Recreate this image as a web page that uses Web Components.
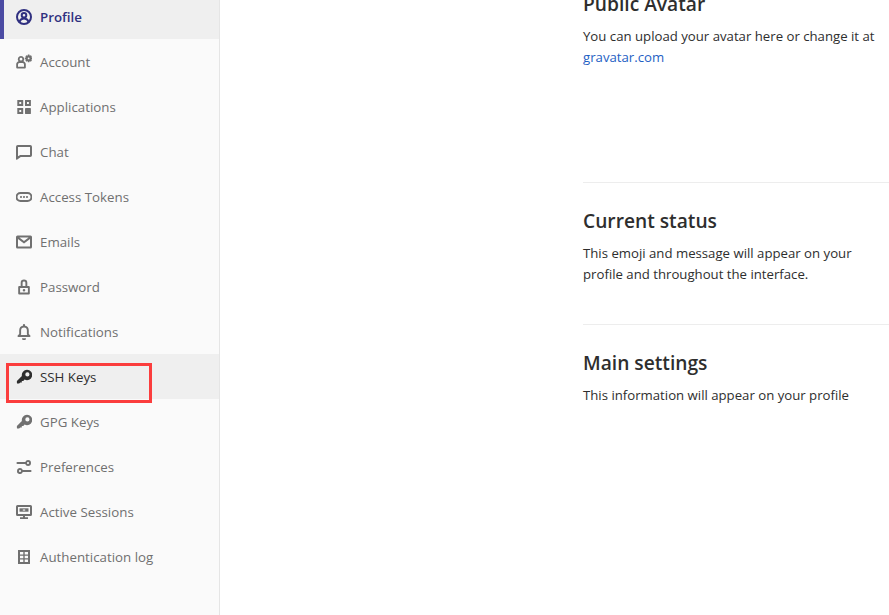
<!DOCTYPE html>
<html>
<head>
<meta charset="utf-8">
<style>
  html, body { margin: 0; height: 100%; overflow: hidden; background: #fff; }
  body { display: flex; font-family: "Open Sans", "Noto Sans", sans-serif; font-size: 13.2px; }
</style>
</head>
<body>
<side-bar>
  <side-item label="Profile" icon="profile" active></side-item>
  <side-item label="Account" icon="account"></side-item>
  <side-item label="Applications" icon="apps"></side-item>
  <side-item label="Chat" icon="chat"></side-item>
  <side-item label="Access Tokens" icon="token"></side-item>
  <side-item label="Emails" icon="mail"></side-item>
  <side-item label="Password" icon="lock"></side-item>
  <side-item label="Notifications" icon="bell"></side-item>
  <side-item label="SSH Keys" icon="key" hover marked></side-item>
  <side-item label="GPG Keys" icon="key"></side-item>
  <side-item label="Preferences" icon="prefs"></side-item>
  <side-item label="Active Sessions" icon="monitor"></side-item>
  <side-item label="Authentication log" icon="log"></side-item>
</side-bar>
<main-panel>
  <settings-block heading="Public Avatar" style="height:217px">You can upload your avatar here or change it at <a href="#">gravatar.com</a></settings-block>
  <settings-block heading="Current status" style="height:142px">This emoji and message will appear on your profile and throughout the interface.</settings-block>
  <settings-block heading="Main settings" style="height:120px">This information will appear on your profile</settings-block>
</main-panel>
<script>
const ICONS = {
  profile: '<circle cx="8" cy="8" r="7" fill="none" stroke="currentColor" stroke-width="2"/><circle cx="8" cy="6.300" r="2.300" fill="none" stroke="currentColor" stroke-width="2"/><path d="M3.400 12.800c.8-2.300 2.500-3.300 4.600-3.300s3.800 1 4.600 3.300" fill="none" stroke="currentColor" stroke-width="2"/>',
  account: '<path fill-rule="evenodd" d="M5 2a3.200 3.200 0 0 1 2.500 5.200c1.300.5 2.300 1.700 2.300 3.100v3.200a1 1 0 0 1-1 1h-7.600a1 1 0 0 1-1-1v-3.200c0-1.400 1-2.600 2.300-3.100A3.200 3.200 0 0 1 5 2zm0 1.800a1.400 1.400 0 1 0 0 2.800 1.400 1.400 0 0 0 0-2.800zM2 10.500v2.200h6v-2.200a1.600 1.600 0 0 0-1.600-1.400H3.600A1.600 1.600 0 0 0 2 10.500z"/><path fill-rule="evenodd" d="M11.900 .5h1.500l.3 1.200 1.100-.5 1.100 1.100-.6 1 1.200.4v1.500l-1.200.3.600 1.100-1.100 1.100-1.100-.6-.3 1.200h-1.500l-.3-1.200-1.100.6-1.100-1.100.6-1.100-1.200-.3V3.700l1.200-.4-.6-1 1.100-1.100 1.100.5zm.75 3a.9.900 0 1 0 0 1.800.9.900 0 0 0 0-1.800z"/>',
  apps: '<path fill-rule="evenodd" d="M1.300 1h5.900v5.900H1.300zm2 2v1.900h1.900V3zM9 1h5.900v5.900H9zm2 2v1.900h1.900V3zM1.300 9h5.900v5.900H1.300zm2 2v1.900h1.900V11z"/><rect x="9" y="9" width="5.900" height="5.900" rx=".4"/>',
  chat: '<path fill-rule="evenodd" d="M1.800 1h12.400A1.800 1.800 0 0 1 16 2.800v8.400a1.800 1.800 0 0 1-1.800 1.800H4.800l-3.500 2.600A.8.800 0 0 1 0 15V2.800A1.800 1.800 0 0 1 1.800 1zm.2 2v9.300L4.200 11H14V3z"/>',
  token: '<path fill-rule="evenodd" d="M4.500 3h7a5 5 0 0 1 0 10h-7a5 5 0 0 1 0-10zm0 2a3 3 0 0 0 0 6h7a3 3 0 0 0 0-6z"/><circle cx="5" cy="8" r="1.050"/><circle cx="8" cy="8" r="1.050"/><circle cx="11" cy="8" r="1.050"/>',
  mail: '<path fill-rule="evenodd" d="M1.500 1.500h13A1.500 1.500 0 0 1 16 3v10a1.500 1.500 0 0 1-1.500 1.500h-13A1.500 1.500 0 0 1 0 13V3a1.500 1.500 0 0 1 1.500-1.500zm1.900 2L8 7l4.600-3.500zM2 5v7.500h12V5L8 9.600z"/>',
  lock: '<path fill-rule="evenodd" d="M8 .5a3.300 3.300 0 0 1 3.300 3.300V7h1.500a1 1 0 0 1 1 1v6.500a1 1 0 0 1-1 1H3.200a1 1 0 0 1-1-1V8a1 1 0 0 1 1-1h1.500V3.800A3.300 3.300 0 0 1 8 .5zm0 1.900a1.400 1.400 0 0 0-1.400 1.400V7h2.800V3.800A1.400 1.400 0 0 0 8 2.400zM4.100 8.900v4.700h7.800V8.900zM8 9.900a1.300 1.300 0 1 1 0 2.600 1.300 1.300 0 0 1 0-2.600z"/>',
  bell: '<path fill-rule="evenodd" d="M8 0a1.100 1.100 0 0 1 1.100 1.100v.7a4.800 4.800 0 0 1 3.700 4.700v3.400l1.500 1.700c.5.600.1 1.400-.6 1.400H2.300c-.7 0-1.100-.8-.6-1.400l1.500-1.700V6.500a4.800 4.800 0 0 1 3.700-4.700v-.7A1.100 1.100 0 0 1 8 0zm0 3.600a2.900 2.900 0 0 0-2.900 2.900v4.100l-.6.500h7l-.6-.5V6.500A2.900 2.900 0 0 0 8 3.600z"/><path d="M6 14.200h4a2 2 0 0 1-4 0z"/>',
  key: '<path fill-rule="evenodd" d="M11 .8a5.200 5.200 0 1 1-2.400 9.800L7.300 11.900H5.800v1.500H4.300l-1.200 1.200H1.500a.6.600 0 0 1-.6-.6v-2l5-5A5.200 5.200 0 0 1 11 .8zm.4 2.500a2.100 2.100 0 1 0 0 4.200 2.100 2.100 0 0 0 0-4.200z"/>',
  prefs: '<path fill-rule="evenodd" d="M12 1a3 3 0 0 1 0 6 3 3 0 0 1-2.800-2H1.500a1.050 1.050 0 0 1 0-2.100h7.800A3 3 0 0 1 12 1zm0 1.900a1.100 1.100 0 1 0 0 2.200 1.100 1.100 0 0 0 0-2.200zM4 9a3 3 0 0 1 2.800 2h7.700a1.050 1.050 0 0 1 0 2.100H6.800A3 3 0 1 1 4 9zm0 1.900a1.100 1.100 0 1 0 0 2.200 1.100 1.100 0 0 0 0-2.200z"/>',
  monitor: '<path fill-rule="evenodd" d="M1.500 1h13A1.500 1.500 0 0 1 16 2.500v8a1.500 1.500 0 0 1-1.500 1.500H9v1.200h3V15H4v-1.800h3V12H1.500A1.500 1.500 0 0 1 0 10.500v-8A1.500 1.500 0 0 1 1.500 1zm.5 2v7h12V3z"/><rect x="3.500" y="4.300" width="9" height="3.400"/><rect x="6.800" y="5.500" width="2.400" height="1.100" fill="#fafafa"/>',
  log: '<path fill-rule="evenodd" d="M2 1h12v14H2zM4 3v2.500h3.300V3zm4.700 0v2.500H12V3zM4 6.800v2.400h3.300V6.800zm4.700 0v2.400H12V6.800zM4 10.500V13h3.300v-2.500zm4.700 0V13H12v-2.500z"/>'
};

class SideBar extends HTMLElement {
  constructor() {
    super();
    this.attachShadow({ mode: 'open' }).innerHTML = `
      <style>
        :host {
          display: block;
          flex: 0 0 219px;
          box-sizing: content-box;
          height: 621px;
          margin-top: -6px;
          background: #fafafa;
          border-right: 1px solid #e5e5e5;
        }
      </style>
      <slot></slot>`;
  }
}

class SideItem extends HTMLElement {
  constructor() {
    super();
    this.attachShadow({ mode: 'open' });
  }

  connectedCallback() {
    const marked = this.hasAttribute('marked') ? '<span class="mark"></span>' : '';
    this.shadowRoot.innerHTML = `
      <style>
        :host {
          display: flex;
          align-items: center;
          gap: 8px;
          position: relative;
          box-sizing: border-box;
          height: 45px;
          padding: 0 0 0 16px;
          color: #707070;
          font-size: 13.3px;
          white-space: nowrap;
        }
        :host([hover]) { background: #efefef; color: #2e2e2e; }
        :host([active]) {
          background: #efefef;
          color: #303080;
          font-weight: 600;
          box-shadow: inset 4px 0 0 #4b4ba3;
        }
        svg { width: 16px; height: 16px; flex: none; fill: currentColor; }
        .mark {
          position: absolute;
          left: 6px;
          top: 9px;
          width: 146px;
          height: 40px;
          box-sizing: border-box;
          border: 3px solid #fb3d3d;
        }
      </style>
      <svg viewBox="0 0 16 16">${ICONS[this.getAttribute('icon')]}</svg>
      <span>${this.getAttribute('label')}</span>
      ${marked}`;
  }
}

class MainPanel extends HTMLElement {
  constructor() {
    super();
    this.attachShadow({ mode: 'open' }).innerHTML = `
      <style>
        :host {
          display: block;
          flex: 1;
          min-width: 0;
          margin-top: -34px;
          padding-left: 363px;
        }
      </style>
      <slot></slot>`;
  }
}

class SettingsBlock extends HTMLElement {
  constructor() {
    super();
    this.attachShadow({ mode: 'open' });
  }

  connectedCallback() {
    this.shadowRoot.innerHTML = `
      <style>
        :host {
          display: block;
          box-sizing: border-box;
          padding-top: 26px;
          color: #2e2e2e;
        }
        :host(:not(:last-child)) { border-bottom: 1px solid #ededed; }
        h4 { margin: 0 0 10px; font-size: 19.2px; line-height: 24px; font-weight: 600; color: #2e2e2e; }
        p { margin: 0; width: 296px; line-height: 21px; }
        ::slotted(a) { color: #1f5fc4; text-decoration: none; }
      </style>
      <h4>${this.getAttribute('heading')}</h4>
      <p><slot></slot></p>`;
  }
}

customElements.define('side-bar', SideBar);
customElements.define('side-item', SideItem);
customElements.define('main-panel', MainPanel);
customElements.define('settings-block', SettingsBlock);
</script>
</body>
</html>
